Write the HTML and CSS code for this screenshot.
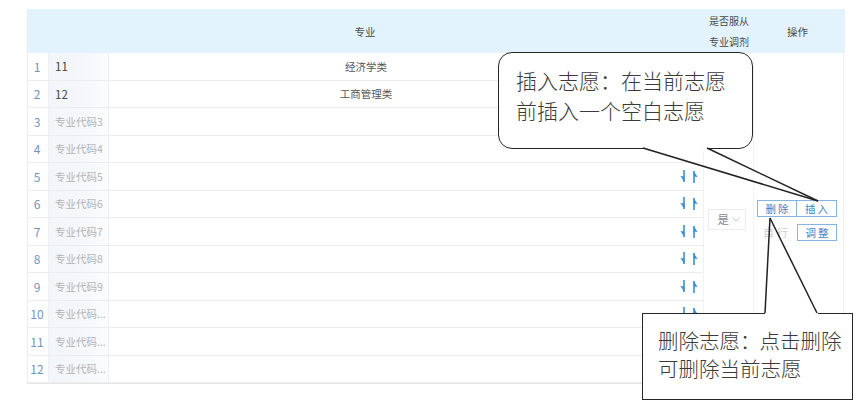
FILE: index.html
```html
<!DOCTYPE html>
<html lang="zh-CN">
<head>
<meta charset="utf-8">
<title>志愿表</title>
<link rel="stylesheet" href="styles.css">
</head>
<body>
<div class="page">
  <div class="grid">
    <div class="th th-major">专业</div>
    <div class="th th-adj"><div>是否服从</div><div>专业调剂</div></div>
    <div class="th th-op">操作</div>

    <div class="cell adj">
      <span class="select">是<svg class="chev" viewBox="0 0 8 5" width="8" height="5"><path d="M0.5 0.5 L4 4 L7.5 0.5" fill="none" stroke="#c8c8c8" stroke-width="1"/></svg></span>
    </div>
    <div class="cell op">
      <div class="btns">
        <span class="btn">删除</span><span class="btn">插入</span>
        <span class="self">自行</span><span class="btn">调整</span>
      </div>
    </div>

    <div class="cell idx">1</div><div class="cell code filled">11</div><div class="cell major">经济学类</div><div class="cell arr"></div>
    <div class="cell idx">2</div><div class="cell code filled">12</div><div class="cell major">工商管理类</div><div class="cell arr"></div>
    <div class="cell idx">3</div><div class="cell code">专业代码3</div><div class="cell major"></div><div class="cell arr"></div>
    <div class="cell idx">4</div><div class="cell code">专业代码4</div><div class="cell major"></div><div class="cell arr"></div>
    <div class="cell idx">5</div><div class="cell code">专业代码5</div><div class="cell major"></div><div class="cell arr"><svg class="arrows" viewBox="0 0 20 13" width="20" height="13"><path d="M5 0 V12" stroke="#3b8fd9" stroke-width="1.6"/><polygon points="5.4,12 1.4,6 5.4,6.6" fill="#3b8fd9"/><path d="M15 1 V13" stroke="#3b8fd9" stroke-width="1.6"/><polygon points="14.6,1 18.6,7 14.6,6.4" fill="#3b8fd9"/></svg></div>
    <div class="cell idx">6</div><div class="cell code">专业代码6</div><div class="cell major"></div><div class="cell arr"><svg class="arrows" viewBox="0 0 20 13" width="20" height="13"><path d="M5 0 V12" stroke="#3b8fd9" stroke-width="1.6"/><polygon points="5.4,12 1.4,6 5.4,6.6" fill="#3b8fd9"/><path d="M15 1 V13" stroke="#3b8fd9" stroke-width="1.6"/><polygon points="14.6,1 18.6,7 14.6,6.4" fill="#3b8fd9"/></svg></div>
    <div class="cell idx">7</div><div class="cell code">专业代码7</div><div class="cell major"></div><div class="cell arr"><svg class="arrows" viewBox="0 0 20 13" width="20" height="13"><path d="M5 0 V12" stroke="#3b8fd9" stroke-width="1.6"/><polygon points="5.4,12 1.4,6 5.4,6.6" fill="#3b8fd9"/><path d="M15 1 V13" stroke="#3b8fd9" stroke-width="1.6"/><polygon points="14.6,1 18.6,7 14.6,6.4" fill="#3b8fd9"/></svg></div>
    <div class="cell idx">8</div><div class="cell code">专业代码8</div><div class="cell major"></div><div class="cell arr"><svg class="arrows" viewBox="0 0 20 13" width="20" height="13"><path d="M5 0 V12" stroke="#3b8fd9" stroke-width="1.6"/><polygon points="5.4,12 1.4,6 5.4,6.6" fill="#3b8fd9"/><path d="M15 1 V13" stroke="#3b8fd9" stroke-width="1.6"/><polygon points="14.6,1 18.6,7 14.6,6.4" fill="#3b8fd9"/></svg></div>
    <div class="cell idx">9</div><div class="cell code">专业代码9</div><div class="cell major"></div><div class="cell arr"><svg class="arrows" viewBox="0 0 20 13" width="20" height="13"><path d="M5 0 V12" stroke="#3b8fd9" stroke-width="1.6"/><polygon points="5.4,12 1.4,6 5.4,6.6" fill="#3b8fd9"/><path d="M15 1 V13" stroke="#3b8fd9" stroke-width="1.6"/><polygon points="14.6,1 18.6,7 14.6,6.4" fill="#3b8fd9"/></svg></div>
    <div class="cell idx">10</div><div class="cell code">专业代码...</div><div class="cell major"></div><div class="cell arr"><svg class="arrows" viewBox="0 0 20 13" width="20" height="13"><path d="M5 0 V12" stroke="#3b8fd9" stroke-width="1.6"/><polygon points="5.4,12 1.4,6 5.4,6.6" fill="#3b8fd9"/><path d="M15 1 V13" stroke="#3b8fd9" stroke-width="1.6"/><polygon points="14.6,1 18.6,7 14.6,6.4" fill="#3b8fd9"/></svg></div>
    <div class="cell idx">11</div><div class="cell code">专业代码...</div><div class="cell major"></div><div class="cell arr"></div>
    <div class="cell idx">12</div><div class="cell code">专业代码...</div><div class="cell major"></div><div class="cell arr"></div>
  </div>

  <div class="callout callout-insert">
    <span class="gap gap-bottom"></span>
    <p>插入志愿：在当前志愿</p>
    <p>前插入一个空白志愿</p>
  </div>
  <div class="callout callout-delete">
    <span class="gap gap-top"></span>
    <p>删除志愿<span class="colon">：</span>点击删除</p>
    <p>可删除当前志愿</p>
  </div>

  <svg class="tails" viewBox="0 0 864 410" width="864" height="410">
    <g stroke="#222" stroke-width="1.5" fill="none">
      <line x1="643" y1="148" x2="818" y2="201"/>
      <line x1="707" y1="148" x2="818" y2="201"/>
      <line x1="765" y1="313" x2="770" y2="218"/>
      <line x1="817" y1="313" x2="770" y2="218"/>
    </g>
  </svg>
</div>
</body>
</html>
```

FILE: styles.css
```css
html, body {
  margin: 0;
  padding: 0;
  background: #fff;
}

.page {
  position: relative;
  width: 864px;
  height: 410px;
  overflow: hidden;
  box-sizing: border-box;
  padding: 9px 0 0 27px;
  font-family: "Noto Sans CJK SC", "Noto Sans", sans-serif;
  color: #444;
}

.grid {
  display: grid;
  grid-template-columns: 21px 60px 570px 25px 50px 91px;
  grid-template-rows: 44px repeat(12, 27.5px);
  width: 817px;
  border-left: 1px solid #ececec;
  border-right: 1px solid #eef0f2;
  border-bottom: 1px solid #e6e6e6;
  box-sizing: border-box;
}

.th {
  background: #e3f3fd;
  font-size: 10.5px;
  color: #4a4a4a;
  display: flex;
  align-items: center;
  justify-content: center;
  text-align: center;
}

.th-major {
  grid-column: 1 / 5;
  padding-right: 2px;
}

.th-adj {
  flex-direction: column;
  line-height: 21px;
  font-size: 10px;
}

.th-op {
  padding-right: 4px;
}

.cell {
  box-sizing: border-box;
  border-bottom: 1px solid #ececec;
  display: flex;
  align-items: center;
  font-size: 11px;
}

.idx {
  justify-content: center;
  color: #6f95c2;
  font-size: 12px;
  padding-right: 2px;
  border-right: 1px solid #eef1f4;
}

.code {
  background: linear-gradient(90deg, #f2f5f9 0%, #f6f8fb 70%, #fbfcfd 100%);
  color: #b4b4b4;
  padding-left: 6px;
  font-size: 10.5px;
  border-right: 1px solid #edf0f3;
  white-space: nowrap;
  overflow: hidden;
}

.code.filled {
  color: #444;
  font-size: 11.5px;
}

.major {
  justify-content: center;
  padding-right: 56px;
  color: #555;
  font-size: 10.5px;
}

.arr {
  align-items: center;
  border-right: 1px solid #f0f2f4;
}

.arrows {
  display: block;
}

.adj {
  grid-column: 5;
  grid-row: 2 / 14;
  border-bottom: none;
  justify-content: center;
  padding-top: 2px;
  border-right: 1px solid #f1f3f5;
}

.select {
  display: inline-flex;
  align-items: center;
  gap: 3px;
  width: 38px;
  height: 21px;
  box-sizing: border-box;
  padding-left: 9px;
  border: 1px solid #ececec;
  color: #8a8a8a;
  font-size: 11.5px;
  margin-right: 4px;
}

.op {
  grid-column: 6;
  grid-row: 2 / 14;
  border-bottom: none;
  align-items: center;
  padding-left: 3px;
  padding-top: 4px;
}

.btns {
  display: grid;
  grid-template-columns: 40px 40px;
  grid-template-rows: 17px 17px;
  row-gap: 7px;
}

.btn {
  box-sizing: border-box;
  border: 1px solid #86b4e4;
  color: #3f7fc4;
  font-size: 10.5px;
  letter-spacing: 2px;
  padding-left: 2px;
  display: flex;
  align-items: center;
  justify-content: center;
  background: #fff;
}

.btns .btn:nth-child(2) {
  border-left: none;
}

.self {
  color: #cfcfcf;
  font-size: 11px;
  letter-spacing: 3px;
  display: flex;
  align-items: center;
  justify-content: center;
}

.callout {
  position: absolute;
  background: #fff;
  box-sizing: border-box;
  border: 1.6px solid #262626;
  color: #3a3a3a;
  font-size: 21px;
  font-weight: 300;
  z-index: 2;
}

.callout p {
  margin: 0;
  white-space: nowrap;
}

.callout-insert {
  left: 498px;
  top: 52px;
  width: 255px;
  height: 97px;
  border-radius: 14px;
  padding: 12px 0 0 17px;
  line-height: 30px;
}

.callout-delete {
  left: 642px;
  top: 313px;
  width: 211px;
  height: 87px;
  padding: 12px 0 0 15px;
  line-height: 28px;
  font-size: 20.5px;
  border-width: 1.8px;
}

.colon {
  letter-spacing: -6px;
  margin-right: 5px;
}

.gap {
  position: absolute;
  background: #fff;
  height: 4px;
}

.gap-bottom {
  left: 145px;
  width: 63px;
  bottom: -3px;
}

.gap-top {
  left: 122px;
  width: 53px;
  top: -3px;
}

.tails {
  position: absolute;
  left: 0;
  top: 0;
  z-index: 3;
  pointer-events: none;
}
```
